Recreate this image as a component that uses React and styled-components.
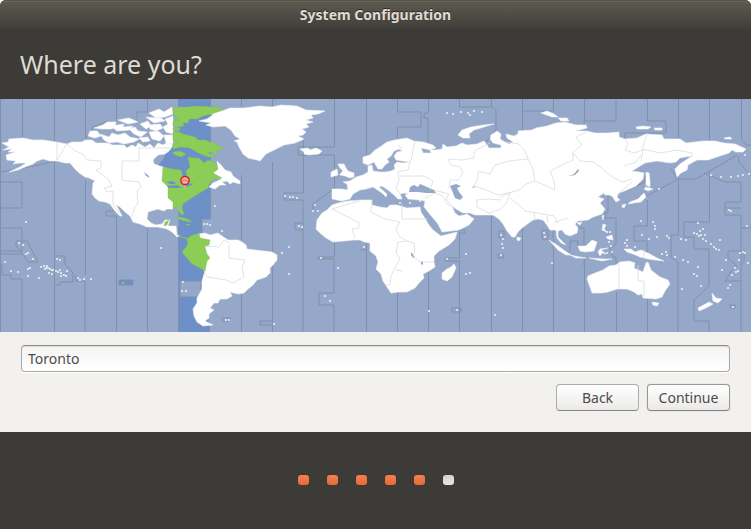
import { useState } from "react";
import styled, { createGlobalStyle } from "styled-components";

const GlobalStyle = createGlobalStyle`
    * {
        box-sizing: border-box;
    }
    body {
        margin: 0;
        background: #fff;
        font-family: "Noto Sans", "Open Sans", sans-serif;
        font-size: 14px;
    }
`;

const Window = styled.div`
    display: flex;
    flex-direction: column;
    min-height: 100vh;
    background: #3c3b37;
    border-radius: 6px 6px 0 0;
`;

const TitleBar = styled.header`
    display: flex;
    align-items: center;
    justify-content: center;
    height: 29px;
    padding-bottom: 2px;
    border-top: 1px solid #55534a;
    border-radius: 6px 6px 0 0;
    background: linear-gradient(#5d5b50, #3f3e39);
    box-shadow: inset 0 1px #69675c;
    color: #dfdbd2;
    font-size: 14px;
    font-weight: 700;
    text-shadow: 0 -1px #2b2a27;
`;

const Heading = styled.h1`
    margin: 0;
    padding: 18px 20px;
    color: #dfdbd2;
    font-size: 25px;
    font-weight: 400;
    line-height: 34px;
`;

const Map = styled.svg`
    display: block;
    width: 100%;
    height: auto;
    background: #95a8c9;
`;

const Form = styled.form`
    display: flex;
    flex-direction: column;
    gap: 12px;
    padding: 13px 21px 21px;
    background: #f2f1f0;
`;

const LocationInput = styled.input`
    width: 100%;
    height: 27px;
    padding: 0 6px;
    border: 1px solid #aaa8a4;
    border-top-color: #8f8d87;
    border-radius: 4px;
    background: linear-gradient(#f4f4f4, #fff);
    box-shadow: inset 0 1px 1px #dddcda, 0 1px #fff;
    color: #4c4c4c;
    font: inherit;
    outline: none;
`;

const Actions = styled.div`
    display: flex;
    justify-content: flex-end;
    gap: 8px;
`;

const Button = styled.button`
    width: 83px;
    height: 27px;
    padding: 0;
    border: 1px solid ${({ $primary }) => ($primary ? "#9a9893" : "#aeaca8")};
    border-bottom-color: #85837e;
    border-radius: 4px;
    background: linear-gradient(#fff, #ebeae9);
    box-shadow: ${({ $primary }) => ($primary ? "0 0 1px #a8a6a2" : "none")};
    color: #4c4c4c;
    font: inherit;
`;

const Footer = styled.footer`
    display: flex;
    flex: 1;
    justify-content: center;
    gap: 18px;
    padding: 43px 0;
`;

const Dot = styled.span`
    width: 11px;
    height: 10px;
    border-radius: 3px;
    background: ${({ $done }) =>
      $done ? "linear-gradient(#f58050, #e86a38)" : "linear-gradient(#d4d3d1, #e6e5e3)"};
`;

// Borders between the time zones at sea
const ZONE_LINES = [
  "M0.5 99V332M0 182H22V208H0M0 228H22V251H0M0 254H22M2 264V275H11V279H22V332",
  "M22.5 99V140M16 241H27L38 262H28L20 250L16 246Z",
  "M0 172L20 169L56 161M54.5 99V141M54.5 161V332M54 285H60V282H73V273L65 264V256H54",
  "M85.5 99V139L93 127L108 121M85.5 180V275M76 275V281H85V332",
  "M116.5 99V119M147.5 99V112H137V124M116.5 216V332M106 211H114M106 211V216H116",
  "M147.5 228V332M119 280H133V285H119Z",
  "M178.5 99V106M178.5 226V332M210.5 99V219H202V233M180 281H201V297H180Z",
  "M241.5 99V107M241.5 175V240M241.5 294V332M231 318H230V321H222V318Z",
  "M272.5 99V108M272.5 162V332M303.5 139V155M303.5 156V193H284V200H303V332",
  "M334.5 99V147H298V155H334.5V188L313 204V211",
  "M334.5 240V257H318V259H334V293H319V305H334V332M303 223H295V230H303",
  "M366.5 99V158M366.5 241V250H360M366.5 250V332M272 321H260V325H272",
  "M397.5 99V112H421V127H397.5V138M397.5 292V332",
  "M428.5 99V112L424 114V118H428V142M428.5 271V332",
  "M459.5 99V107H491M459.5 216V258H445V261H459.5V332M459 230H465V233H459",
  "M452 308H461V312H452ZM491.5 99V107L496 110V130L486 142M491.5 216V332",
  "M522.5 99V131M522 111H553M522.5 228V332M553.5 99V111M553.5 239V332",
  "M499 231H504V238H499ZM498 254H503V258H498ZM542 230H548V239H542Z",
  "M584.5 99V121H616V99M584 121V130M584.5 259V332M553 231V238M570 252V241H578V246H584V228H578",
  "M584 260V266M608 186V213H605V218H616V244L610 249L613 257H616V264M616.5 292V332",
  "M647.5 99V121H666V133H625V139M647.5 200V226H634V241H647V253M647.5 299V332",
  "M678.5 99V141M678.5 178V235H671V257L678 262V332M645 176V182L626 191",
  "M645 197L678 179H696L737 155M670 168L677 178",
  "M709.5 99V141M709.5 172V222H684V237H694V249H709V286L694 300V321H709V332",
  "M704 173L725 182H741V202H725V215H741V332M725 208H741",
  "M741.5 99V140L746 145H751M741 228H751M738 156L739 162L751 176",
  "M728 251V258L737 266L732 270L725 281H741M728 251H744V261L741 265",
  "M730 305H735V308H730Z",
];

const SELECTED_ZONE =
  "M178.5 99H210.5V219H202V234L212 242V262L204 271L204 281H180V297H201L210 325V332H178.5V170L165 170L156 168L164 158L165 154L175 146L178.5 140Z";

const LAND = [
  // North America
  "M2 143L8 142L9 139L23 138L33 140L43 140L56 142L67 144L72 142L82 142L85 140L92 140L96 143L107 143L113 145L124 145L127 148L132 145L136 147L138 143L145 147L150 144L154 148L158 143L163 145L168 142L173 145L169 151L165 154L158 155L153 160L154 164L160 166L163 167L170 170L171 184L176 200L173 209L167 209L164 211L158 209L151 211L148 212L147 219L151 223L156 225L162 224L165 220L170 220L168 226L176 226L177 235L180 236L177 237L172 232L167 229L158 227L147 227L140 224L133 222L130 216L125 212L120 207L116 205L119 210L122 216L120 216L115 211L110 204L105 202L99 201L95 198L92 194L93 183L95 181L89 178L85 177L79 173L75 169L70 163L65 163L57 161L50 161L43 159L37 161L33 164L25 167L18 170L9 172L20 167L26 163L20 163L13 164L16 161L7 160L6 155L15 152L8 152L12 149L3 150L9 147Z",
  // Labrador and Newfoundland
  "M212 173L218 169L217 161L221 165L225 170L231 172L233 176L240 181L240 184L233 182L230 184L227 181L222 182L226 185L220 185L215 189L209 187L213 183L222 179L215 177Z",
  // Arctic archipelago
  "M90 131L97 131L101 136L95 138L88 136Z",
  "M94 128L103 125L107 122L116 122L115 125L120 126L111 129L102 129Z",
  "M100 134L109 137L112 133L118 135L125 133L130 137L139 139L134 142L124 144L117 142L109 143L104 140Z",
  "M111 126L124 124L123 127L133 126L130 130L117 131Z",
  "M118 120L129 118L138 122L128 124Z",
  "M129 129L135 127L138 131L147 132L141 137L134 134Z",
  "M140 124L148 121L151 126L146 129Z",
  "M149 113L159 109L164 112L172 107L173 114L165 117L156 118Z",
  "M146 117L156 118L161 118L165 121L154 123Z",
  "M149 125L160 124L163 128L156 131L150 129Z",
  "M165 119L173 116V134L166 132L163 127L168 124Z",
  "M149 132L158 131L164 136L160 141L152 139Z",
  "M164 135L173 135V144L166 143Z",
  "M139 138L148 137L150 141L143 142ZM163 147L170 148L167 152L161 151Z",
  // Greenland
  "M199 121L207 119L213 115L210 113L222 111L230 108L244 108L260 106L272 107L281 105L297 106L306 110L325 111L318 114L311 115L313 118L306 120L313 122L306 124L309 127L302 129L306 132L303 135L298 136L304 139L295 143L284 145L272 151L266 154L260 161L257 160L248 158L243 154L239 147L237 142L234 141L240 139L235 136L231 130L225 126L213 127L206 125L211 123Z",
  "M300 149L308 148L310 150L316 148L322 151L319 154L309 155L304 154L304 152Z",
  // South America
  "M198 234L205 233L210 235L218 233L222 236L228 240L238 240L242 242L246 245L247 249L255 250L264 251L272 252L277 255L277 260L273 265L270 268L270 273L266 277L257 280L253 285L248 289L244 293L238 294L230 292L232 296L227 299L220 299L218 303L214 303L210 308L214 310L209 314L209 318L205 321L213 325L203 326L197 322L194 316L193 309L197 303L197 298L202 289L202 281L205 271L205 257L202 245Z",
  // Europe and Asia
  "M332 189L342 189L348 190L347 184L343 182L350 181L356 177L363 175L368 172L368 166L372 165L373 171L380 172L385 172L391 171L395 169L394 165L397 162L403 163L410 162L402 161L396 160L394 156L397 152L402 151L399 149L394 151L391 156L387 159L389 162L385 165L382 169L378 169L374 162L368 165L363 163L363 157L370 155L375 150L380 147L387 142L395 140L407 138L414 141L423 142L433 145L436 148L430 150L421 148L423 153L431 153L430 150L436 150L442 149L443 144L447 147L456 146L462 143L467 145L477 144L484 141L487 145L489 148L501 148L501 145L493 143L490 139L491 135L497 131L501 134L500 139L505 142L509 144L513 142L507 138L506 134L514 136L518 134L518 131L532 130L536 128L547 126L556 123L565 122L576 125L586 125L587 128L576 131L587 131L595 133L608 133L619 132L619 137L625 139L637 138L646 134L662 135L664 139L680 139L686 143L703 141L715 141L724 143L735 144L746 149L743 152L736 152L732 150L729 153L723 155L717 157L708 160L697 160L688 165L687 170L681 173L677 177L675 169L680 164L686 160L692 156L685 157L680 158L676 162L670 163L657 161L645 163L640 166L632 171L639 172L644 173L643 179L636 186L627 190L619 193L617 197L620 200L616 202L612 196L609 195L605 195L604 193L598 197L604 199L600 203L605 209L602 214L593 217L588 220L578 221L575 224L578 228L577 233L570 236L565 234L562 230L558 231L558 237L561 240L566 245L561 243L557 238L556 230L550 230L547 225L543 220L538 219L533 220L522 228L518 232L515 237L512 237L507 231L503 224L499 219L493 215L475 215L470 213L463 213L456 209L452 206L455 213L459 216L464 215L467 214L474 219L469 225L459 230L442 232L438 224L428 212L424 207L425 201L419 200L408 199L405 195L408 194L405 193L400 194L402 199L398 199L394 195L388 190L382 186L379 187L387 194L386 197L382 193L373 187L366 189L360 190L353 194L350 199L342 201L332 199Z",
  "M340 175L345 176L350 178L354 177L354 173L348 171L346 168L344 164L338 164L340 168L343 171L340 174Z",
  "M331 172L337 169L338 175L331 177Z",
  // Africa
  "M332 205L338 203L348 201L362 200L372 200L372 205L380 207L387 208L390 205L397 205L407 208L420 207L421 212L426 220L429 225L433 230L441 236L457 232L455 239L449 245L439 251L434 256L434 262L435 267L429 271L423 274L424 278L419 283L415 288L407 292L399 292L391 293L387 287L383 281L381 274L376 269L378 262L376 256L370 251L370 243L364 242L360 240L354 240L344 241L333 242L326 238L320 233L316 229L317 220L322 213L327 210Z",
  "M454 264L456 268L452 277L447 281L442 279L442 273L447 269L451 267Z",
  // Novaya Zemlya, Svalbard, Severnaya Zemlya
  "M458 135L462 130L471 127L483 125L494 124L484 127L474 130L469 134L470 138L463 138Z",
  "M541 113L547 111L554 114L558 117L552 117Z",
  "M558 118L567 118L569 121L561 121Z",
  "M636 127L643 126L651 127L648 129L637 129ZM654 128H662V130H655ZM724 138L730 137L732 139L725 139Z",
  // Japan and Sakhalin
  "M646 172L649 173L650 181L650 187L646 185Z",
  "M646 187L653 189L648 191L644 189ZM644 193L646 197L641 202L634 203L628 204L630 202L638 199ZM622 205L626 204L624 208L622 207Z",
  // South-east Asia
  "M549 240L557 245L565 251L571 255L566 255L558 250ZM570 255L580 257L586 258L576 258ZM578 246L586 246L592 240L597 242L594 251L585 252L580 251Z",
  "M600 249L608 248L601 250L606 254L602 253L600 256L598 252ZM603 224L606 225L604 229L607 232L602 230ZM606 237L612 235L613 240L608 239ZM589 258L604 259L612 259L602 261Z",
  "M624 249L631 249L635 252L641 250L650 254L657 258L664 261L655 260L648 259L640 257L633 254L627 252Z",
  "M602 216L604 215L603 220ZM577 223L582 222L580 225ZM517 237L521 238L519 241L517 240Z",
  // Australia and New Zealand
  "M588 276L595 273L603 270L609 266L616 265L620 262L629 261L635 263L634 268L643 272L646 263L648 262L651 270L656 274L660 277L668 280L670 284L665 291L662 297L656 299L643 298L642 294L638 295L634 292L627 289L617 289L608 292L602 293L592 293L590 287L587 279Z",
  "M652 302L659 303L657 306L653 305Z",
  "M712 293L716 298L722 299L718 303L713 301ZM709 302L713 304L706 308L699 311L698 308Z",
];

const SELECTED_LAND = [
  "M173 108L180 107L187 107L197 106L213 107L223 108L220 111L212 114L203 116L197 119L189 119L188 123L183 123L184 126L177 127L173 126L173 122L180 120L173 118L177 116L173 114Z",
  "M173 132L179 132L183 134L195 137L198 140L205 140L213 143L222 147L221 150L216 151L217 155L212 152L208 153L216 157L208 157L198 153L195 151L190 148L180 147L173 149L173 143L178 142L173 140Z",
  "M173 128L180 128L180 130L173 130ZM173 152L180 151L186 154L181 157L173 154Z",
  "M163 167L168 168L173 169L181 170L183 177L187 175L186 171L190 167L188 157L194 158L199 158L204 163L208 160L216 163L218 169L213 173L222 178L213 179L210 183L208 188L198 194L190 199L183 204L182 208L184 214L182 215L179 212L177 206L173 209L173 202L168 198L168 187L162 181Z",
  "M175 218L180 217L188 219L192 222L185 221ZM165 222L169 220L167 225L164 226ZM186 224L190 224V225H186Z",
  "M178 236L188 238L191 236L199 233L200 238L210 240L209 245L205 247L207 254L210 258L207 261L205 271L198 267L192 264L186 257L182 252L186 247L188 243L187 239Z",
  "M122 282H124V284H122Z",
];

// Inland seas and lakes, then the water that lies inside the selected zone
const WATER = [
  "M144 172L148 175L150 178L146 176Z",
  "M409 192L410 187L414 185L418 187L420 184L425 186L427 187L434 190L436 193L426 193L418 192Z",
  "M450 186L456 184L461 186L457 188L459 192L463 197L460 200L455 198L453 193Z",
  "M568 176L574 174L578 169L579 171L575 175Z",
  "M411 252L415 257L413 258L411 255ZM421 261L423 262L423 265L421 264Z",
  "M421 209L428 215L435 224L441 231L438 232L429 224Z",
  "M472 187L475 186L474 188Z",
];

const SELECTED_WATER =
  "M166 182L173 181L176 184L170 184ZM167 186L176 185L182 187L178 188L169 188ZM186 185L193 183L192 185L186 187Z";

const COUNTRY_BORDERS = [
  "M57 142V160L67 144L75 151L83 154L87 160L101 161V168L96 170L108 179L112 186L104 188L107 192L113 191L113 205L120 214",
  "M170 148H139V161H122V180L139 182L141 187L137 191L138 203L134 209L132 217",
  "M205 246L219 247L224 240L229 243M229 245L229 258L245 260L242 267L244 277L233 283L226 280L207 277L204 271",
  "M359 201L332 209L350 218L359 223V228L352 229L355 238",
  "M372 200L371 212L385 219L400 222L396 229L399 236L407 241L398 242L396 253L400 258L395 268L391 276L390 285L386 285",
  "M402 204V219H428M407 241L414 243L415 250L413 257L420 262L434 262M396 270L403 271",
  "M399 145L402 151M415 141L413 150L412 157L410 162L408 170L398 172L399 180L396 188L400 194M400 176L424 176L433 181L430 190",
  "M425 198L435 193L443 196L447 204L455 208M434 190L449 194L446 199L452 205",
  "M490 143L474 151L474 158L461 160L448 159L451 165L460 167L463 173L458 180L450 180L449 188",
  "M478 171L490 174L495 165L509 161L528 159L533 169L535 181L526 184L519 190L508 193L498 195L484 189L474 186L478 178Z",
  "M500 197L510 193L506 204L499 210L489 213M476 200L488 199L501 200M477 200L477 207L491 214M510 198L519 205L525 211L543 214L554 216L558 223M535 181L549 187L555 190L554 181L550 171L558 167L573 160L573 152L582 145L576 137L587 132",
  "M506 142L519 144L525 151L528 159M573 153L580 161L594 162L605 171L614 178L623 182L632 179",
  "M625 139L628 144L625 150L634 153L643 150L641 161M647 135L642 149L660 153L677 150L692 153L692 157",
  "M624 166L636 162L641 155M617 195L626 187L632 182M534 212L535 219M547 216L548 223M554 222L562 220L568 218",
  "M619 264V289M638 265V281H644V297M644 249V258",
];

const ISLANDS = [
  [26, 222], [19, 243], [23, 245], [26, 254], [28, 253], [33, 259], [5, 262], [28, 269], [11, 271],
  [18, 272], [30, 268], [28, 276], [39, 278], [41, 267], [44, 266], [46, 268], [48, 268], [50, 269],
  [52, 270], [49, 273], [53, 270], [56, 271], [58, 272], [60, 270], [61, 273], [64, 275], [67, 271],
  [66, 276], [47, 266], [45, 269], [52, 274], [61, 276], [57, 259], [60, 260], [78, 278], [80, 280],
  [84, 279], [91, 279], [161, 248], [183, 282], [182, 291], [186, 291], [215, 206], [204, 224],
  [207, 224], [210, 225], [222, 231], [226, 320], [229, 320], [274, 324], [285, 196], [290, 197],
  [293, 197], [297, 198], [299, 226], [302, 227], [313, 211], [318, 211], [315, 205], [289, 247],
  [282, 253], [289, 274], [321, 258], [338, 268], [325, 296], [330, 301], [364, 247], [429, 311],
  [447, 259], [466, 254], [466, 274], [470, 273], [457, 310], [495, 315], [501, 235], [503, 239],
  [502, 244], [503, 248], [501, 255], [544, 233], [545, 237], [552, 263], [400, 203], [410, 203],
  [420, 201], [447, 113], [453, 114], [461, 112], [468, 113], [474, 111], [482, 112], [470, 115],
  [653, 222], [655, 226], [655, 229], [641, 221], [642, 235], [649, 239], [657, 237], [667, 236],
  [669, 238], [625, 243], [627, 240], [681, 239], [686, 240], [694, 233], [697, 234], [699, 236],
  [701, 235], [703, 239], [705, 235], [700, 231], [698, 223], [703, 229], [706, 241], [711, 244],
  [714, 247], [716, 249], [719, 250], [720, 240], [662, 254], [666, 252], [667, 255], [675, 257],
  [683, 260], [688, 262], [694, 274], [697, 276], [698, 267], [682, 289], [701, 286], [722, 270],
  [726, 260], [740, 253], [743, 252], [745, 253], [739, 260], [748, 263], [735, 268], [736, 272],
  [732, 275], [738, 271], [728, 288], [730, 285], [733, 307], [747, 226], [729, 210], [731, 211],
  [711, 175], [721, 177], [731, 177], [738, 176], [743, 175], [749, 174], [745, 155], [611, 246],
  [609, 242], [612, 252], [607, 253], [610, 232], [607, 232], [627, 246], [635, 247], [659, 189],
];

const WorldMap = () => (
  <Map viewBox="0 99 751 233" role="img">
    <path d={SELECTED_ZONE} fill="#6d90c8" />
    <path d="M119 280H133V285H119Z" fill="#6d90c8" />
    <path d={ZONE_LINES.join("")} fill="none" stroke="#8190aa" strokeWidth="1" />
    <g fill="#fff" stroke="#eef2f4" strokeWidth="0.6" strokeLinejoin="round">
      {LAND.map((d) => (
        <path key={d} d={d} />
      ))}
    </g>
    <g fill="#8ccd57" stroke="#80b963" strokeWidth="0.4">
      {SELECTED_LAND.map((d) => (
        <path key={d} d={d} />
      ))}
    </g>
    <path d={WATER.join("")} fill="#95a8c9" />
    <path d={SELECTED_WATER} fill="#6d90c8" />
    <path d={COUNTRY_BORDERS.join("")} fill="none" stroke="#d9dddc" strokeWidth="0.8" />
    {ISLANDS.map(([x, y]) => (
      <ellipse key={`${x}-${y}`} cx={x} cy={y} rx="1.2" ry="0.9" fill="#e6ebed" />
    ))}
    <path d="M185 184V188" stroke="#b9b7ac" strokeWidth="2" />
    <circle cx="185" cy="180.5" r="4.2" fill="#f18a8a" stroke="#cf2020" strokeWidth="1.3" />
    <path d="M182.5 179.5Q185 176.5 187.5 179.5M183 182.5H187" fill="none" stroke="#f9c0bd" strokeWidth="1" />
  </Map>
);

const STEPS = 6;
const DONE = 5;

const App = () => {
  const [location, setLocation] = useState("Toronto");

  return (
    <>
      <GlobalStyle />
      <Window>
        <TitleBar>System Configuration</TitleBar>
        <Heading id="question">Where are you?</Heading>
        <WorldMap />
        <Form onSubmit={(e) => e.preventDefault()}>
          <LocationInput
            type="text"
            aria-labelledby="question"
            value={location}
            onChange={(e) => setLocation(e.target.value)}
          />
          <Actions>
            <Button type="button">Back</Button>
            <Button type="submit" $primary>
              Continue
            </Button>
          </Actions>
        </Form>
        <Footer>
          {Array.from({ length: STEPS }, (_, i) => (
            <Dot key={i} $done={i < DONE} />
          ))}
        </Footer>
      </Window>
    </>
  );
};

export default App;
